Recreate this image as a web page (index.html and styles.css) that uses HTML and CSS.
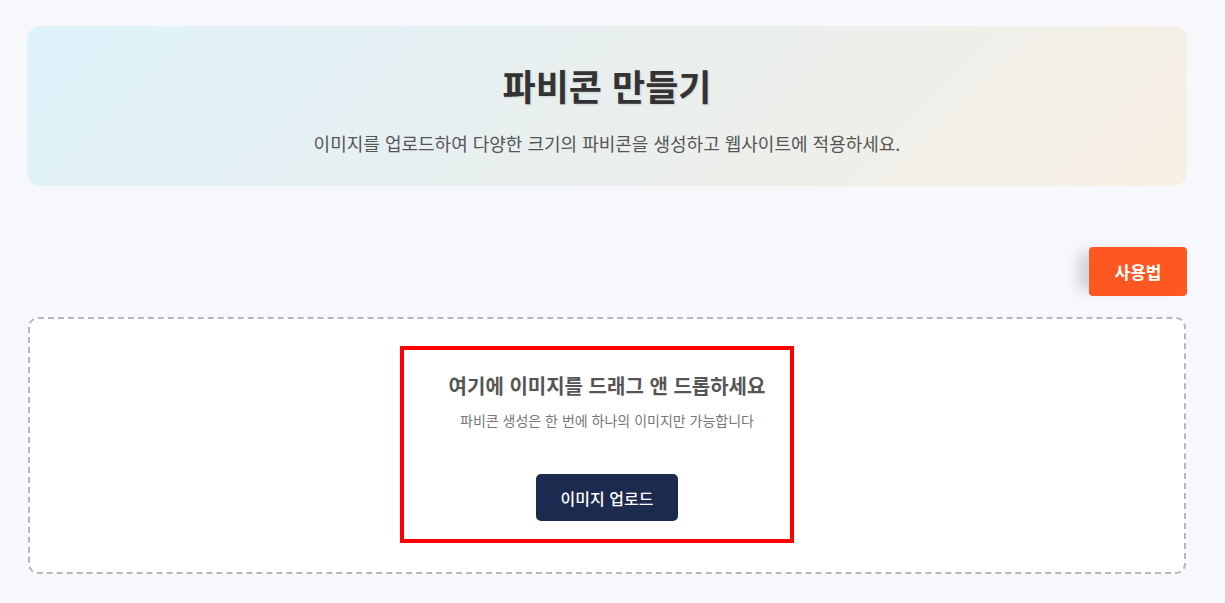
FILE: index.html
```html
<!DOCTYPE html>
<html lang="ko">
  <head>
    <meta charset="UTF-8" />
    <title>파비콘 만들기</title>
    <link rel="stylesheet" href="styles.css">
  </head>
  <body>
    <div class="page">
      <header class="hero">
        <h1>파비콘 만들기</h1>
        <p>이미지를 업로드하여 다양한 크기의 파비콘을 생성하고 웹사이트에 적용하세요.</p>
      </header>

      <div class="toolbar">
        <button class="help-btn" id="helpBtn">사용법</button>
      </div>

      <div class="dropzone" id="dropzone">
        <div class="drop-box">
          <h3>여기에 이미지를 드래그 앤 드롭하세요</h3>
          <p>파비콘 생성은 한 번에 하나의 이미지만 가능합니다</p>
          <button class="upload-btn" id="uploadBtn">이미지 업로드</button>
        </div>
      </div>
    </div>
  </body>
</html>
```

FILE: styles.css
```css
body {
  font-family: "Noto Sans CJK KR", "Noto Sans", sans-serif;
  margin: 0;
  background-color: #f7f8fc;
  color: #333;
}

.page {
  width: 1160px;
  margin-left: 27px;
  padding-top: 26px;
}

.hero {
  height: 160px;
  box-sizing: border-box;
  padding: 39px 20px 0;
  text-align: center;
  border-radius: 14px;
  background: linear-gradient(135deg, #dff3fb 0%, #e9efee 50%, #f7efe3 100%);
}

.hero h1 {
  margin: 0;
  font-size: 36px;
  line-height: 40px;
  font-weight: 700;
  color: #333;
  text-shadow: 1px 1px 2px rgba(0, 0, 0, 0.12);
}

.hero p {
  margin: 26px 0 0;
  font-size: 18px;
  line-height: 24px;
  color: #555;
}

.toolbar {
  display: flex;
  justify-content: flex-end;
  margin: 61px 0 21px;
}

.help-btn {
  width: 98px;
  height: 49px;
  background-color: #ff5722;
  color: #fff;
  border: none;
  border-radius: 4px;
  font-family: inherit;
  font-size: 17px;
  font-weight: 700;
  cursor: pointer;
  box-shadow: -16px 0 14px -6px rgba(0, 0, 0, 0.16);
}

.dropzone {
  display: flex;
  justify-content: center;
  margin-left: 1px;
  width: 1158px;
  box-sizing: border-box;
  padding: 27px 0 29px;
  background: #fff;
  border: 2px dashed #b6b6bd;
  border-radius: 10px;
}

.drop-box {
  width: 394px;
  margin-right: 20px;
  box-sizing: border-box;
  padding: 22px 0 18px 20px;
  border: 4px solid #ff0000;
  text-align: center;
}

.drop-box h3 {
  margin: 0;
  font-size: 20px;
  line-height: 27px;
  font-weight: 700;
  color: #555;
}

.drop-box p {
  margin: 11px 0 0;
  font-size: 14px;
  line-height: 20px;
  color: #777;
}

.upload-btn {
  margin-top: 44px;
  width: 142px;
  height: 47px;
  background-color: #1b2a4e;
  color: #fff;
  border: none;
  border-radius: 5px;
  font-family: inherit;
  font-size: 16px;
  font-weight: 500;
  cursor: pointer;
}
```
